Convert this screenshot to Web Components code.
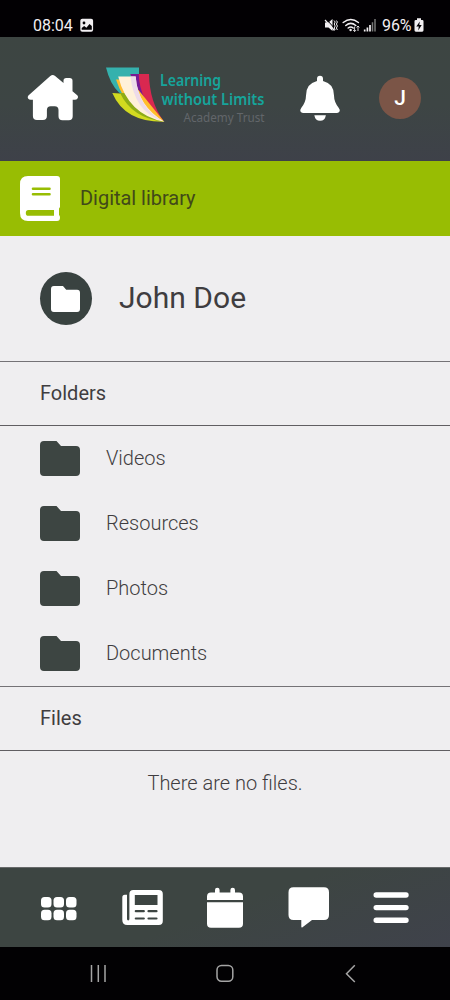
<!DOCTYPE html>
<html lang="en">
<head>
<meta charset="utf-8">
<title>Digital library</title>
<style>
html,body{margin:0;padding:0;background:#efeef0}
body{font-family:Roboto,"Liberation Sans",sans-serif;color:#3f3d40}
</style>
</head>
<body>
<library-app></library-app>
<script>
const define = (name, css, html) => customElements.define(name, class extends HTMLElement {
  constructor() {
    super();
    this.attachShadow({ mode: 'open' }).innerHTML = `<style>*{box-sizing:border-box}svg{display:block;flex:none}${css}</style>${html}`;
  }
});

define('status-bar', `
:host{display:flex;align-items:flex-start;height:37px;background:#020003;color:#f2eff2;padding:0 26px 0 33px;font-size:16px;line-height:20px}
span{margin-top:15.5px}
.time{width:41px;letter-spacing:-.05px}
.pic{margin:18px 0 0 6px}
.icons{margin:17px 0 0 auto}
.pct{width:32px;white-space:nowrap;margin-left:4px;letter-spacing:-.1px}
.bat{margin:18px 0 0 0}
`, `
<span class="time">08:04</span>
<svg class="pic" width="14" height="14" viewBox="0 0 14 14"><rect x=".3" y=".8" width="12.8" height="13" rx="2" fill="#f2eff2"/><circle cx="4" cy="5" r="1.4" fill="#020003"/><path d="M1.7 11.8V10l2.5-2 2.2 1.7L9.5 6l2.3 2v3.8z" fill="#020003"/></svg>
<svg class="icons" width="54" height="17" viewBox="324 17 54 17" fill="none" stroke="#f2eff2">
<path d="M325 22.5h3.5l4-3.5v12l-4-3.5H325z" fill="#f2eff2" stroke="none"/><path d="M326.3 19.2l9 10" stroke="#020003" stroke-width="1"/><path d="M325 20l9.5 10.5" stroke-width="1.2"/><path d="M334 20.5l1.2 1.5-1 2 1 2-1 2 1 2M336.4 20.5l1 1.5-1 2 1 2-1 2 1 2" stroke-width="1"/>
<path d="M343.2 22.5q7.6-6 15.2 0M345.8 25.5q5-4.2 10 0M348.2 28q2.6-2 5 0" stroke-width="1.5" stroke-linecap="round"/><circle cx="350.6" cy="30" r="1.2" fill="#f2eff2" stroke="none"/><path d="M354.6 26.5v5m-1.4-1.4 1.4 1.4 1.4-1.4M358 31v-5m-1.4 1.4L358 26l1.4 1.4" stroke-width=".9"/>
<path d="M364.7 31.5v-2M367.4 31.5v-4M370 31.5v-6.6" stroke-width="1.7"/><path d="M372.5 31.5v-9.3M375 31.5V19" stroke="#777" stroke-width="1.5"/></svg>
<span class="pct">96%</span>
<svg class="bat" width="10" height="14" viewBox="0 0 10 14"><path d="M3 .3h4V2h1.2Q9.5 2 9.5 3.3v9Q9.5 13.7 8.2 13.7H1.8Q.5 13.7.5 12.3v-9Q.5 2 1.8 2H3z" fill="#f2eff2"/><path d="M5.8 3.5 2.3 8.4h2.5l-.6 4L7.7 7H5.3z" fill="#020003"/></svg>
`);

define('trust-logo', `:host{display:block;width:162px}svg{overflow:visible}text{font-family:"Noto Sans","Open Sans",sans-serif}`, `
<svg width="172" height="68" viewBox="105 66 172 68">
<path d="M106 67.5h33V78H122l6 20-9-5.500Q110 84 106 67.500z" fill="#35b1ad"/>
<path d="M130.500 74H149q.5 28 14.500 46.800Q136 106 130.500 74z" fill="#d92850"/>
<path d="M130.500 74h8.200q1 28 23.300 45.500Q140 110 134 86z" fill="#761995"/>
<path d="M116 79.500h14L164 121.500Q128 117 116 79.500z" fill="#ffbd2d"/>
<path d="M112.300 93q9 0 14 1.500Q134 112 164.500 121.800 125 122.500 112.300 93z" fill="#d2da20"/>
<path d="M120 93h7q9 20 36 28.500Q132 118 120 93z" fill="#8eac17"/>
<path d="M118.200 76.500h17.500Q137.500 106 164.500 121.800 128 115 118.200 76.500z" fill="#fff1d9"/>
<path d="M130.500 76.500h5.200Q137.500 106 162 121 134 111 130.500 76.500z" fill="#eddbea"/>
<g font-weight="600" font-size="15.500" fill="#16a49b"><text x="160" y="86.300" textLength="61" lengthAdjust="spacingAndGlyphs">Learning</text><text x="161.500" y="105.200" textLength="103" lengthAdjust="spacingAndGlyphs">without Limits</text></g>
<text x="183.500" y="121.500" font-size="12.600" fill="#62666a" textLength="81" lengthAdjust="spacingAndGlyphs">Academy Trust</text></svg>`);

define('app-header', `
:host{display:flex;align-items:flex-start;height:124px;background:linear-gradient(180deg,#3d4542,#3d4544 55%,#3e4149);padding-left:27px}
.home{margin-top:37px}trust-logo{margin:29px 0 0 26px}.bell{margin:37.500px 0 0 32px}
.avatar{width:42px;height:42px;border-radius:50%;background:#7b5547;color:#fff;margin:39.500px 0 0 38px;display:flex;align-items:center;justify-content:center;font-size:21px;font-weight:500}
`, `
<svg class="home" width="52" height="48" viewBox="27 74 52 48" fill="#fff"><path d="M50.3 76q2.4-1.8 4.8 0L63.5 83v-2.2q0-2.8 2.8-2.8h3.4q2.8 0 2.8 2.8v10.4l5 4.3q1.2 1.5 0 3-.8 1.2-2.8 1.2h-2v16.5q0 4-4 4h-6.2q-4 0-4-4V110q0-3.8-3.8-3.8h-4q-3.8 0-3.8 3.8v6q0 4-4 4h-6q-4 0-4-4V99.7h-2q-2 0-2.8-1.2-1-1.5.3-3z"/></svg>
<trust-logo></trust-logo>
<svg class="bell" width="42" height="48" viewBox="299 74 42 48" fill="#fff"><path d="M317 80v-2.2a3 3 0 0 1 6 0V80q11 2.6 11 14.5 0 6.500 4.800 12.500 1.700 2 .7 3.500-.7 1.400-2.500 1.400h-34q-1.800 0-2.500-1.400-.8-1.500.7-3.500 4.800-6 4.800-12.500Q306 82.600 317 80zM314.300 114.200h11.600q-1 5.600-5.800 5.600t-5.800-5.600z"/></svg>
<div class="avatar">J</div>`);

define('section-banner', `
:host{display:flex;align-items:flex-start;height:75px;background:#98bd03;padding-left:20px}
svg{margin-top:15px}span{margin:25px 0 0 20px;font-size:20px;line-height:24px;color:#414919;letter-spacing:-.03px}
`, `<svg width="40" height="45" viewBox="0 0 40 45"><path d="M8 0h29q3 0 3 3v27.500q0 1.200-1 2v6.500q1 .8 1 2.500 0 3.500-3 3.500H8q-8 0-8-8V8Q0 0 8 0z" fill="#fff"/><path d="M13 12.700h16.500M13 18.300h16.500" stroke="#98bd03" stroke-width="2.600" stroke-linecap="round"/><path d="M34 34v5.800H8.500q-2.700 0-2.700-2.900T8.500 34z" fill="#98bd03"/></svg><span><slot></slot></span>`);

define('folder-icon', `:host{display:block;width:40px;height:35px;color:#3d4542}svg{width:100%;height:100%}`,
`<svg viewBox="0 0 40 35" preserveAspectRatio="none"><path d="M4 0h12.500l4.500 5h15q4 0 4 4v22q0 4-4 4H4q-4 0-4-4V4q0-4 4-4z" fill="currentColor"/></svg>`);

define('user-row', `
:host{display:flex;align-items:flex-start;height:125px;padding-left:40px}
.disc{width:52px;height:53px;margin-top:36px;border-radius:50%;background:#394240;display:flex;align-items:center;justify-content:center}
folder-icon{width:29px;height:26px;color:#fff;margin-right:1px}
span{font-size:30px;line-height:36px;margin:44px 0 0 27px;letter-spacing:.02px}
`, `<div class="disc"><folder-icon></folder-icon></div><span><slot></slot></span>`);

define('section-title', `
:host{display:flex;align-items:center;height:65px;padding:0 40px 1px;border-top:1px solid #747276;border-bottom:1px solid #605e62;font-size:20px;line-height:24px}
`, `<slot></slot>`);

define('folder-row', `
:host{display:flex;align-items:flex-start;height:65px;padding-left:40px;font-size:20px;font-weight:300;line-height:24px}
folder-icon{margin-top:15.300px}
span{margin:20px 0 0 26px}`, `<folder-icon></folder-icon><span><slot></slot></span>`);

define('empty-note', `:host{display:block;height:116px;padding-top:20px;text-align:center;font-size:20px;line-height:24px;font-weight:300}`, `<slot></slot>`);

define('tab-bar', `
:host{display:flex;height:80px;padding:0 39px 0 40px;justify-content:space-between;background:linear-gradient(160deg,#3d4542 50%,#3f424b);border-top:1px solid #67696a}
svg{margin-top:16px}
`, `
<svg width="38" height="48" viewBox="40 884 38 48" fill="#fff"><rect x="41" y="897" width="10.500" height="10.500" rx="3.500"/><rect x="53.500" y="897" width="10.500" height="10.500" rx="3.500"/><rect x="66" y="897" width="10.500" height="10.500" rx="3.500"/><rect x="41" y="909.700" width="10.500" height="10.500" rx="3.500"/><rect x="53.500" y="909.700" width="10.500" height="10.500" rx="3.500"/><rect x="66" y="909.700" width="10.500" height="10.500" rx="3.500"/></svg>
<svg width="42" height="48" viewBox="121.200 884 42 48"><path d="M133.500 890H159q4 0 4 4v27q0 4-4 4h-31.500q-5 0-5-5v-22.500q0-2.700 2.500-2.700h2.200V919q0 1.400 1.200 1.400t1.200-1.400v-25q0-4 3.900-4z" fill="#fff"/><path d="M135 895h22.700v10H135z" fill="#3d4542"/><path d="M136 911.200h8M148.700 911.200h8M136 918.500h8M148.700 918.500h8" stroke="#3d4542" stroke-width="2.200" stroke-linecap="round"/></svg>
<svg width="38" height="48" viewBox="207 884 38 48" fill="#fff"><path d="M207 900v-3.500q0-4 4-4h4V890q0-2.300 2.300-2.300t2.300 2.300v2.500h10.800V890q0-2.300 2.300-2.300T235 890v2.500h4q4 0 4 4v3.500zM207 902.300h36v21.500q0 4-4 4h-28q-4 0-4-4z"/></svg>
<svg width="42" height="48" viewBox="288 884 42 48" fill="#fff"><path d="M293.500 887.200H324q5 0 5 5V915q0 5-5 5h-12l-9.500 7.200q-1.200.6-1.200-.8V920h-7.800q-5 0-5-5v-22.800q0-5 5-5z"/></svg>
<svg width="38" height="48" viewBox="373.300 884 38 48" stroke="#fff" stroke-width="5.400" stroke-linecap="round"><path d="M376.500 895h29.800M376.500 907.600h29.800M376.500 920.200h29.800"/></svg>`);

define('system-nav', `
:host{display:flex;height:53px;background:#020103;padding:0 94px 0 89px;justify-content:space-between}
svg{margin-top:17px}`, `
<svg width="17" height="19" fill="none" stroke="#a5a5a5" stroke-width="1.500"><path d="M2.500 1v17M9.300 1v17M16 1v17"/></svg>
<svg width="19" height="19" fill="none" stroke="#a5a5a5" stroke-width="1.500"><rect x="1" y="1.500" width="15.800" height="15.800" rx="4.500"/></svg>
<svg width="12" height="19" fill="none" stroke="#a5a5a5" stroke-width="1.500"><path d="M10.800 1.300 2.500 9.700l8.300 8.300"/></svg>`);

define('library-app', `
:host{display:flex;flex-direction:column;width:450px;height:1000px;background:#efeef0;overflow:hidden}
main{flex:1}`, `
<status-bar></status-bar><app-header></app-header><section-banner>Digital library</section-banner>
<main><user-row>John Doe</user-row><section-title>Folders</section-title>
<folder-row>Videos</folder-row><folder-row>Resources</folder-row><folder-row>Photos</folder-row><folder-row>Documents</folder-row>
<section-title>Files</section-title><empty-note>There are no files.</empty-note></main>
<tab-bar></tab-bar><system-nav></system-nav>`);
</script>
</body>
</html>
